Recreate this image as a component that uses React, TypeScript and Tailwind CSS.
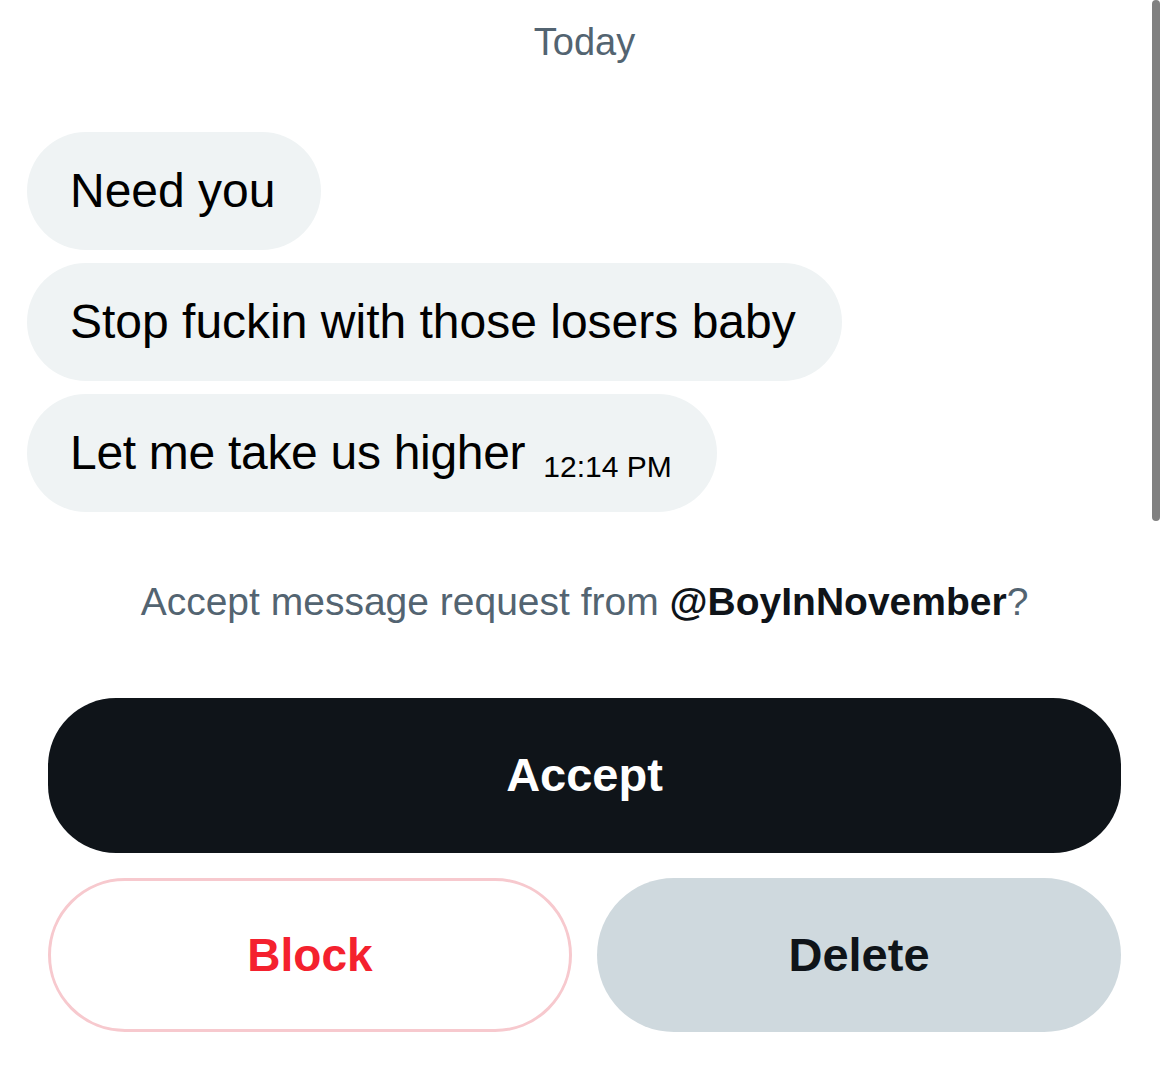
const messages = ["Need you", "Stop fuckin with those losers baby"]

const App = () => {
  return (
    <div className="relative w-full h-[1081px] bg-white overflow-hidden font-['Liberation_Sans',Arial,sans-serif] text-[#0f1419]">
      <div className="absolute right-[9px] top-0 w-[8px] h-[521px] rounded-full bg-[#808080]" />

      <p className="pt-[20px] text-center text-[38px] leading-[44px] text-[#536471]">Today</p>

      <div className="mt-[68px] flex flex-col items-start gap-[13px] pl-[27px]">
        {messages.map((m) => (
          <div key={m} className="h-[118px] flex items-center pl-[43px] pr-[46px] rounded-full bg-[#eff3f4] text-[48px] text-black">
            {m}
          </div>
        ))}
        <div className="h-[118px] flex items-center pl-[43px] pr-[45px] rounded-full bg-[#eff3f4] text-black">
          <span className="text-[48px] tracking-[-0.3px]">Let me take us higher</span>
          <span className="ml-[18px] mt-[26px] text-[30px]">12:14 PM</span>
        </div>
      </div>

      <p className="mt-[66px] text-center text-[39px] leading-[48px] text-[#536471]">
        Accept message request from <span className="font-bold text-[#0f1419]">@BoyInNovember</span>?
      </p>

      <div className="mt-[72px] px-[48px] flex flex-col gap-[25px]">
        <button className="h-[155px] w-full rounded-[68px] bg-[#0f1419] text-white text-[47px] font-bold">
          Accept
        </button>
        <div className="grid grid-cols-2 gap-[25px]">
          <button className="h-[154px] rounded-full border-[3px] border-[#f7c9ce] bg-white text-[#f4212e] text-[46px] font-bold">
            Block
          </button>
          <button className="h-[154px] rounded-full bg-[#cfd9de] text-[#0f1419] text-[47px] font-bold">
            Delete
          </button>
        </div>
      </div>
    </div>
  )
}

export default App
